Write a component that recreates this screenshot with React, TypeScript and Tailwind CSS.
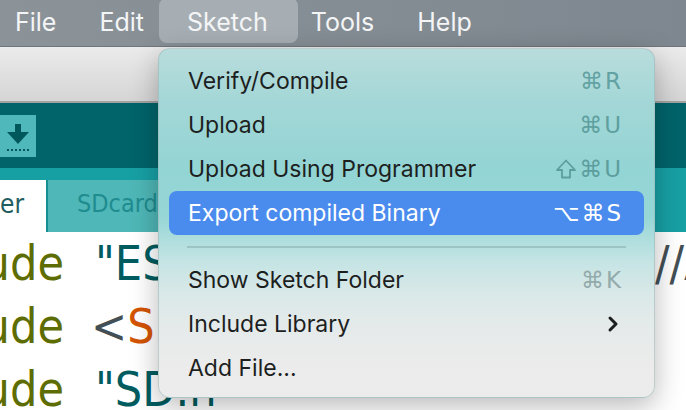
import { ChevronRight } from "lucide-react";

type Item = {
    label: string;
    keys?: string;
    shift?: boolean;
    keysColor?: string;
    active?: boolean;
    submenu?: boolean;
};

const topItems: Item[] = [
    { label: "Verify/Compile", keys: "⌘R", keysColor: "text-[#62a2a2]" },
    { label: "Upload", keys: "⌘U", keysColor: "text-[#5e9f9f]" },
    { label: "Upload Using Programmer", keys: "⌘U", shift: true, keysColor: "text-[#5c9e9e]" },
    { label: "Export compiled Binary", keys: "⌥⌘S", active: true },
];

const bottomItems: Item[] = [
    { label: "Show Sketch Folder", keys: "⌘K", keysColor: "text-[#93abab]" },
    { label: "Include Library", submenu: true },
    { label: "Add File..." },
];

const MenuRow = ({ item }: { item: Item }) => {
    return (
        <div
            className={`mx-[10px] h-[44px] flex items-center justify-between pl-[19px] pr-[21px] rounded-[8px] ${item.active ? "bg-[#4a8bee] text-white" : "text-[#1d1f1f]"
                }`}
        >
            <span className="text-[23px] leading-none">{item.label}</span>
            {item.keys && (
                <span
                    className={`flex items-center text-[23px] leading-none font-['DejaVu_Sans',sans-serif] tracking-[2px] ${item.active ? "text-white" : item.keysColor
                        }`}
                >
                    {item.shift && (
                        <svg width="22" height="22" viewBox="0 0 22 22" className="mr-[2px]">
                            <path
                                d="M11 2.5 L20 12 H15 V19.5 H7 V12 H2 Z"
                                fill="none"
                                stroke="currentColor"
                                strokeWidth="1.8"
                                strokeLinejoin="round"
                            />
                        </svg>
                    )}
                    {item.keys}
                </span>
            )}
            {item.submenu && (
                <ChevronRight className="w-[24px] h-[24px] text-[#1d1f1f] -mr-[2px]" strokeWidth={3} />
            )}
        </div>
    );
};

const CodeLine = ({ children, tail }: { children: React.ReactNode; tail?: string }) => {
    return (
        <div className="flex h-[63px]">
            <div className="w-[64px] shrink-0 overflow-hidden flex justify-end text-[#5e6d03]">
                <span>#include</span>
            </div>
            <div className="w-[591px] shrink-0 overflow-hidden pl-[31px]">{children}</div>
            <div className="flex-1 overflow-hidden text-[#434f54]">{tail}</div>
        </div>
    );
};

export default function App() {
    const menus = ["File", "Edit", "Sketch", "Tools", "Help"];

    return (
        <div className="relative w-[686px] h-[410px] overflow-hidden bg-white font-['Inter',sans-serif]">
            {/* macOS menu bar */}
            <div className="h-[47px] flex items-center pl-[15px] gap-[43px] bg-[linear-gradient(90deg,#8b9399,#7e878f)] border-b border-[#6f777d]">
                {menus.map((m) => (
                    <div key={m} className="relative">
                        {m === "Sketch" && (
                            <div className="absolute -left-[28px] -right-[30px] -top-[12px] h-[45px] rounded-[8px] bg-[#a6aeb4]"></div>
                        )}
                        <span className="relative text-[25px] leading-none text-[#f4f5f6]">{m}</span>
                    </div>
                ))}
            </div>

            {/* window title strip */}
            <div className="h-[56px] bg-[linear-gradient(180deg,#ebebeb,#d5d5d5)] border-b-2 border-[#a3a3a3]"></div>

            {/* toolbar */}
            <div className="h-[65px] bg-[#00646a] pt-[12px]">
                <div className="w-[36px] h-[42px] bg-[#4fb8bb] flex flex-col items-center justify-center">
                    <svg width="30" height="36" viewBox="0 0 30 36">
                        <rect x="12" y="6" width="6" height="10" fill="#00585c" />
                        <path d="M4 14 H26 L15 26 Z" fill="#00585c" />
                        <path d="M4 32 H26" stroke="#00585c" strokeWidth="2" strokeDasharray="2 2" />
                    </svg>
                </div>
            </div>

            {/* tabs */}
            <div className="h-[12px] bg-[#17a0a4]"></div>
            <div className="h-[52px] bg-[#17a0a4] flex">
                <div className="w-[46px] bg-white flex items-center overflow-hidden text-[26px] text-[#1f5d60] pb-[4px] font-['DejaVu_Sans_Condensed',sans-serif]">
                    <span>er</span>
                </div>
                <div className="w-[2px] bg-[#178f92]"></div>
                <div className="w-[560px] bg-[#4fb7b7] flex items-center pl-[29px] pb-[4px] text-[25px] text-[#1f8c90] font-['DejaVu_Sans_Condensed',sans-serif]">
                    SDcard
                </div>
            </div>

            {/* code area */}
            <div className="h-[178px] bg-white font-['DejaVu_Sans_Condensed','DejaVu_Sans',sans-serif] text-[48px] leading-[63px] whitespace-nowrap">
                <CodeLine tail="//A">
                    <span className="text-[#005c5f]">"ESP8266WiFi.h"</span>
                </CodeLine>
                <CodeLine>
                    <span className="text-[#434f54] -ml-[4px]">&lt;</span>
                    <span className="text-[#d35400]">SPI</span>
                    <span className="text-[#434f54]">.h&gt;</span>
                </CodeLine>
                <CodeLine>
                    <span className="text-[#005c5f]">"SD.h"</span>
                </CodeLine>
            </div>

            {/* Sketch dropdown */}
            <div className="absolute left-[158px] top-[48px] w-[497px] h-[350px] rounded-[12px] border border-[#9fb5b5]/60 shadow-[0_8px_28px_rgba(0,0,0,0.28)] bg-[linear-gradient(180deg,#b9dcdc_0%,#a4d7d7_15%,#93d4d4_35%,#96d6d6_48%,#c5e4e4_61%,#d9e8e8_70%,#e4eaea_79%,#ebebeb_90%,#ececec_100%)] pt-[10px]">
                {topItems.map((it) => (
                    <MenuRow key={it.label} item={it} />
                ))}
                <div className="h-[23px] flex items-center px-[28px]">
                    <div className="h-[2px] w-full bg-[#9cc4c4]"></div>
                </div>
                {bottomItems.map((it) => (
                    <MenuRow key={it.label} item={it} />
                ))}
            </div>
        </div>
    );
}
